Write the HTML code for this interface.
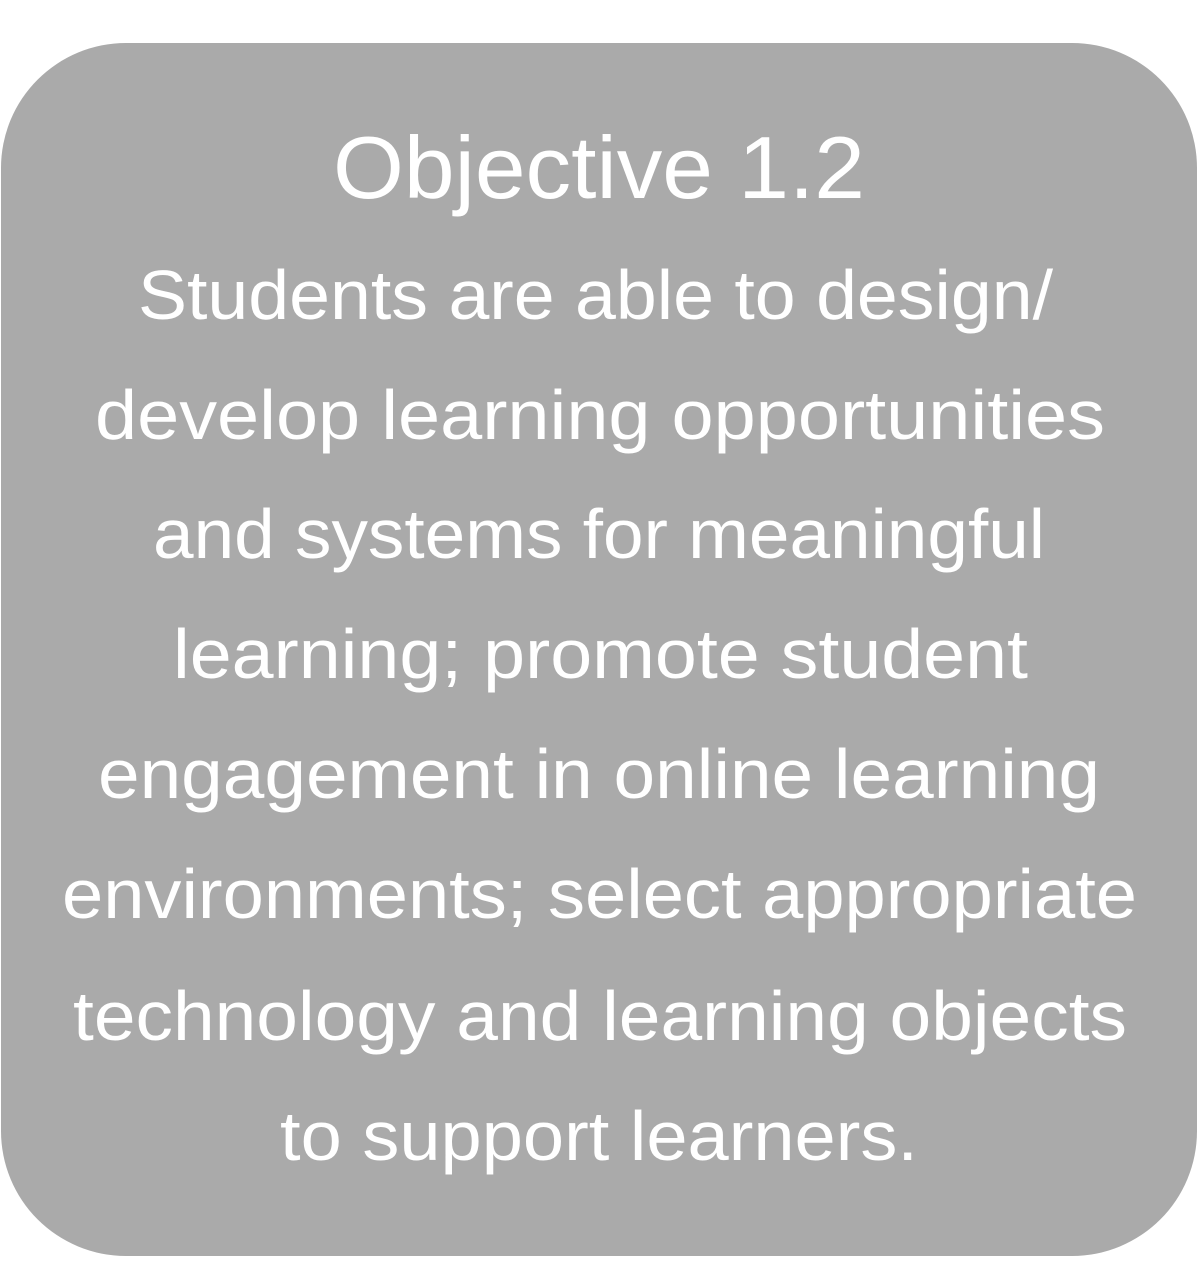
<!DOCTYPE html>
<html><head><meta charset="utf-8"><style>html,body{margin:0;padding:0;background:#fff;width:1200px;height:1288px;overflow:hidden}</style></head>
<body>
<svg width="1200" height="1288" xmlns="http://www.w3.org/2000/svg" style="display:block">
<rect x="1" y="43" width="1196" height="1213" rx="125" ry="125" fill="#aaaaaa"/>
<g fill="#ffffff" font-family="Liberation Sans, sans-serif">
<text x="333" y="198" font-size="88" textLength="532" lengthAdjust="spacingAndGlyphs">Objective 1.2</text>
<g font-size="70" lengthAdjust="spacingAndGlyphs">
<text x="138" y="319" textLength="915" lengthAdjust="spacingAndGlyphs">Students are able to design/</text>
<text x="95" y="439" textLength="1010" lengthAdjust="spacingAndGlyphs">develop learning opportunities</text>
<text x="153" y="558" textLength="892" lengthAdjust="spacingAndGlyphs">and systems for meaningful</text>
<text x="173" y="678" textLength="855" lengthAdjust="spacingAndGlyphs">learning; promote student</text>
<text x="98" y="798" textLength="1002" lengthAdjust="spacingAndGlyphs">engagement in online learning</text>
<text x="62" y="918" textLength="1075" lengthAdjust="spacingAndGlyphs">environments; select appropriate</text>
<text x="73" y="1040" textLength="1054" lengthAdjust="spacingAndGlyphs">technology and learning objects</text>
<text x="280" y="1160" textLength="638" lengthAdjust="spacingAndGlyphs">to support learners.</text>
</g>
</g>
</svg>
</body></html>
